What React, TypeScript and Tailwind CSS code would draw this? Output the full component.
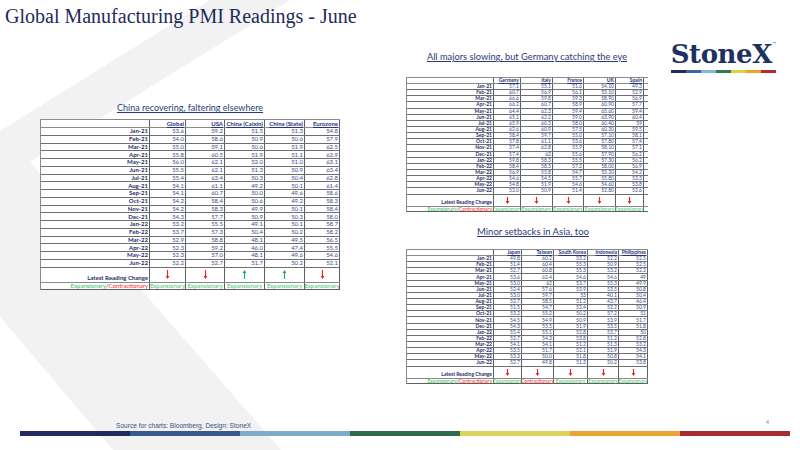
import React from 'react'

const months = [
  'Jan-21', 'Feb-21', 'Mar-21', 'Apr-21', 'May-21', 'Jun-21', 'Jul-21', 'Aug-21', 'Sep-21',
  'Oct-21', 'Nov-21', 'Dec-21', 'Jan-22', 'Feb-22', 'Mar-22', 'Apr-22', 'May-22', 'Jun-22',
]

const globalRows = [
  ['53.6', '59.2', '51.5', '51.3', '54.8'],
  ['54.0', '58.6', '50.9', '50.6', '57.9'],
  ['55.0', '59.1', '50.6', '51.9', '62.5'],
  ['55.8', '60.5', '51.9', '51.1', '62.9'],
  ['56.0', '62.1', '52.0', '51.0', '63.1'],
  ['55.5', '62.1', '51.3', '50.9', '63.4'],
  ['55.4', '63.4', '50.3', '50.4', '62.8'],
  ['54.1', '61.1', '49.2', '50.1', '61.4'],
  ['54.1', '60.7', '50.0', '49.6', '58.6'],
  ['54.2', '58.4', '50.6', '49.2', '58.3'],
  ['54.2', '58.3', '49.9', '50.1', '58.4'],
  ['54.3', '57.7', '50.9', '50.3', '58.0'],
  ['53.2', '55.5', '49.1', '50.1', '58.7'],
  ['53.7', '57.3', '50.4', '50.2', '58.2'],
  ['52.9', '58.8', '48.1', '49.5', '56.5'],
  ['52.3', '59.2', '46.0', '47.4', '55.5'],
  ['52.3', '57.0', '48.1', '49.6', '54.6'],
  ['52.2', '52.7', '51.7', '50.2', '52.1'],
]

const europeRows = [
  ['57.1', '55.1', '51.6', '54.10', '49.3'],
  ['60.7', '56.9', '56.1', '55.10', '52.9'],
  ['66.6', '59.8', '59.3', '58.90', '56.9'],
  ['66.2', '60.7', '58.9', '60.90', '57.7'],
  ['64.4', '62.3', '59.4', '65.60', '59.4'],
  ['65.1', '62.2', '59.0', '63.90', '60.4'],
  ['65.9', '60.3', '58.0', '60.40', '59'],
  ['62.6', '60.9', '57.5', '60.30', '59.5'],
  ['58.4', '59.7', '55.0', '57.10', '58.1'],
  ['57.8', '61.1', '53.6', '57.80', '57.4'],
  ['57.4', '62.8', '55.9', '58.10', '57.1'],
  ['57.4', '62', '55.6', '57.90', '56.2'],
  ['59.8', '58.3', '55.5', '57.30', '56.2'],
  ['58.4', '58.3', '57.2', '58.00', '56.9'],
  ['56.9', '55.8', '54.7', '55.20', '54.2'],
  ['54.6', '54.5', '55.7', '55.80', '53.3'],
  ['54.8', '51.9', '54.6', '54.60', '53.8'],
  ['52.0', '50.9', '51.4', '52.80', '52.6'],
]

const asiaRows = [
  ['49.8', '60.2', '53.2', '52.2', '52.5'],
  ['51.4', '60.4', '55.3', '50.9', '52.5'],
  ['52.7', '60.8', '55.3', '53.2', '52.2'],
  ['53.6', '62.4', '54.6', '54.6', '49'],
  ['53.0', '62', '53.7', '55.3', '49.9'],
  ['52.4', '57.6', '53.9', '53.5', '50.8'],
  ['53.0', '59.7', '53', '40.1', '50.4'],
  ['52.7', '58.5', '51.2', '43.7', '46.4'],
  ['51.5', '54.7', '52.4', '52.2', '50.9'],
  ['53.2', '55.2', '50.2', '57.2', '51'],
  ['54.5', '54.9', '50.9', '53.9', '51.7'],
  ['54.3', '55.5', '51.9', '53.5', '51.8'],
  ['55.4', '55.1', '52.8', '53.7', '50'],
  ['52.7', '54.3', '53.8', '51.2', '52.8'],
  ['54.1', '54.1', '51.2', '51.3', '53.2'],
  ['53.5', '51.7', '52.1', '51.9', '54.3'],
  ['53.3', '50.0', '51.8', '50.8', '54.1'],
  ['52.7', '49.8', '51.3', '50.2', '53.8'],
]

type Dir = 'up' | 'down'
type Sizes = { text: string; head: string; row: string; latest: string; exp: string; arrow: number }

function Arrow({ dir, h }: { dir: Dir; h: number }) {
  const color = dir === 'up' ? '#1aa95b' : '#ee1c25'
  return (
    <svg width={5} height={h} viewBox={`0 0 5 ${h}`}>
      {dir === 'down' ? (
        <>
          <line x1={2.5} y1={0} x2={2.5} y2={h - 2} stroke={color} strokeWidth={1.1} />
          <path d={`M0.6 ${h - 3} L2.5 ${h} L4.4 ${h - 3} Z`} fill={color} />
        </>
      ) : (
        <>
          <line x1={2.5} y1={2} x2={2.5} y2={h} stroke={color} strokeWidth={1.1} />
          <path d="M0.6 3 L2.5 0 L4.4 3 Z" fill={color} />
        </>
      )}
    </svg>
  )
}

function PmiTable({
  widths,
  headers,
  rows,
  arrows,
  status,
  s,
}: {
  widths: string[]
  headers: string[]
  rows: string[][]
  arrows: Dir[]
  status: ('E' | 'C')[]
  s: Sizes
}) {
  const cell = 'flex border-r border-[#5f5f5f] leading-none'
  return (
    <div className={`inline-flex flex-col border-t border-l border-[#8a8a8a] bg-white font-['Lato',sans-serif] ${s.text}`}>
      <div className={`flex ${s.head} border-b border-[#8a8a8a]`}>
        <div className={`${widths[0]} ${cell}`} />
        {headers.map((h, i) => (
          <div key={h} className={`${widths[i + 1]} ${cell} items-center justify-end pr-[1px]`}>
            <span className="font-bold text-[#26347a] underline">{h}</span>
          </div>
        ))}
      </div>
      {rows.map((r, ri) => (
        <div key={months[ri]} className={`flex ${s.row} border-b border-[#6e6e6e]`}>
          <div className={`${widths[0]} ${cell} items-center justify-end pr-[1px] font-bold text-[#1f2d6a]`}>
            {months[ri]}
          </div>
          {r.map((v, i) => (
            <div key={i} className={`${widths[i + 1]} ${cell} items-center justify-end pr-[1px] text-[#3a4b8f]`}>
              {v}
            </div>
          ))}
        </div>
      ))}
      <div className={`flex ${s.latest} border-b border-[#8a8a8a]`}>
        <div className={`${widths[0]} ${cell} items-end justify-end pr-[1px] pb-[1px] font-bold text-[#1f2d6a]`}>
          Latest Reading Change
        </div>
        {arrows.map((a, i) => (
          <div key={i} className={`${widths[i + 1]} ${cell} items-start justify-center pt-[2px]`}>
            <Arrow dir={a} h={s.arrow} />
          </div>
        ))}
      </div>
      <div className={`flex ${s.exp} border-b border-[#5f5f5f]`}>
        <div className={`${widths[0]} ${cell} items-center justify-end pr-[1px] whitespace-nowrap`}>
          <span className="text-[#2ebd59]">Expansionary</span>
          <span className="text-[#1f2d6a]">/</span>
          <span className="text-[#ff1a1a]">Contractionary</span>
        </div>
        {status.map((st, i) => (
          <div
            key={i}
            className={`${widths[i + 1]} ${cell} items-center justify-center whitespace-nowrap ${
              st === 'E' ? 'text-[#3fc46c]' : 'text-[#ff2a2a]'
            }`}
          >
            {st === 'E' ? 'Expansionary' : 'Contractionary'}
          </div>
        ))}
      </div>
    </div>
  )
}

function Subtitle({ children, cls }: { children: React.ReactNode; cls: string }) {
  return (
    <div className={`flex h-[12px] items-center justify-center font-['Lato',sans-serif] text-[#2c3b78] underline whitespace-nowrap ${cls}`}>
      {children}
    </div>
  )
}

const barColors = ['bg-[#1f2b5e]', 'bg-[#365a8c]', 'bg-[#7eaacb]', 'bg-[#2f6c4b]', 'bg-[#dcd35b]', 'bg-[#eba431]', 'bg-[#a92b31]']
const logoColors = ['bg-[#1f2b5e]', 'bg-[#3f65a8]', 'bg-[#86b6dc]', 'bg-[#2f7a4f]', 'bg-[#d8d43c]', 'bg-[#f0a225]', 'bg-[#b82a32]']

export default function App() {
  const small: Sizes = {
    text: 'text-[5px]',
    head: 'h-[6px]',
    row: 'h-[6.15px]',
    latest: 'h-[12.5px]',
    exp: 'h-[5px]',
    arrow: 7,
  }
  const big: Sizes = {
    text: 'text-[6px]',
    head: 'h-[8px]',
    row: 'h-[7.75px]',
    latest: 'h-[15px]',
    exp: 'h-[7.5px]',
    arrow: 9,
  }

  return (
    <div className="relative flex h-[450px] w-[800px] flex-col overflow-hidden bg-white">
      {/* background chevron */}
      <svg className="absolute inset-0" width={800} height={450} viewBox="0 0 800 450">
        <polygon points="210,0 290,0 30,162 281,450 113,450 0,317 0,131" fill="#f2f2f2" />
      </svg>

      <div className="relative flex h-[34px] items-start pl-[5px] pt-[6px]">
        <h1 className="font-['Liberation_Serif',serif] text-[20px] leading-none text-[#1f2a5c]">
          Global Manufacturing PMI Readings - June
        </h1>
      </div>

      <div className="relative flex flex-1">
        <div className="ml-[40px] flex w-[300px] flex-col pt-[68px]">
          <Subtitle cls="mb-[5px] text-[9px]">China recovering, faltering elsewhere</Subtitle>
          <PmiTable
            widths={['w-[109px]', 'w-[36px]', 'w-[39px]', 'w-[40px]', 'w-[40px]', 'w-[35px]']}
            headers={['Global', 'USA', 'China (Caixin)', 'China (State)', 'Eurozone']}
            rows={globalRows}
            arrows={['down', 'down', 'up', 'up', 'down']}
            status={['E', 'E', 'E', 'E', 'E']}
            s={big}
          />
        </div>

        <div className="ml-[66px] flex w-[242px] flex-col pt-[17px]">
          <Subtitle cls="mb-[14px] text-[9.3px]">All majors slowing, but Germany catching the eye</Subtitle>
          <PmiTable
            widths={['w-[87px]', 'w-[27px]', 'w-[32px]', 'w-[31px]', 'w-[32px]', 'w-[28px]']}
            headers={['Germany', 'Italy', 'France', 'UK', 'Spain']}
            rows={europeRows}
            arrows={['down', 'down', 'down', 'down', 'down']}
            status={['E', 'E', 'E', 'E', 'E']}
            s={small}
          />
          <Subtitle cls="mt-[14px] mb-[11px] pl-[12px] text-[9.5px]">Minor setbacks in Asia, too</Subtitle>
          <PmiTable
            widths={['w-[87px]', 'w-[28px]', 'w-[32px]', 'w-[34px]', 'w-[31px]', 'w-[29px]']}
            headers={['Japan', 'Taiwan', 'South Korea', 'Indonesia', 'Philippines']}
            rows={asiaRows}
            arrows={['down', 'down', 'down', 'down', 'down']}
            status={['E', 'C', 'E', 'E', 'E']}
            s={small}
          />
        </div>

        <div className="ml-auto mr-[24px] flex flex-col items-stretch pt-[7px]">
          <div className="relative pr-[4px] font-['DejaVu_Serif',serif] text-[26px] font-bold leading-none tracking-[-0.4px] text-[#1e3160]">
            StoneX
            <span className="absolute right-0 top-[1px] text-[4px] font-normal">™</span>
          </div>
          <div className="mt-[3px] flex h-[3px]">
            {logoColors.map((c) => (
              <div key={c} className={`flex-1 ${c}`} />
            ))}
          </div>
        </div>
      </div>

      <div className="relative mb-[14px] flex flex-col">
        <div className="flex items-end justify-between pl-[116px] pr-[31px]">
          <span className="font-['Liberation_Sans',sans-serif] text-[6.6px] leading-none text-[#3e4f7e]">
            Source for charts: Bloomberg, Design: StoneX
          </span>
          <span className="mb-[5px] font-['Liberation_Sans',sans-serif] text-[6px] leading-none text-[#8a8a8a]">4</span>
        </div>
        <div className="ml-[20px] mt-[1px] flex h-[5px] w-[770px]">
          {barColors.map((c) => (
            <div key={c} className={`flex-1 ${c}`} />
          ))}
        </div>
      </div>
    </div>
  )
}
